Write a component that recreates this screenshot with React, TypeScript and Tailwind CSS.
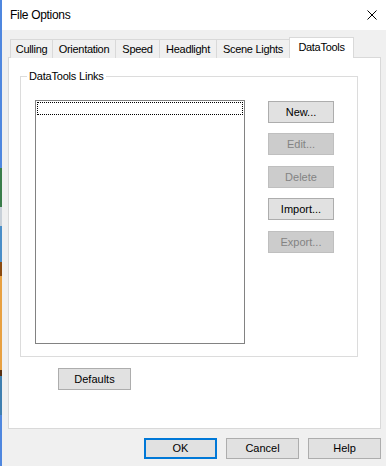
import clsx from "clsx";

const font = "font-['Liberation_Sans',Arial,sans-serif]";

type BtnProps = {
  label: string;
  disabled?: boolean;
  primary?: boolean;
  className?: string;
};

function Btn({ label, disabled, primary, className }: BtnProps) {
  return (
    <button
      className={clsx(
        "flex items-center justify-center text-[11px] leading-none",
        disabled
          ? "bg-[#cccccc] border border-[#bfbfbf] text-[#838383]"
          : "bg-[#e1e1e1] text-black",
        !disabled && (primary ? "border-2 border-[#0078d7]" : "border border-[#adadad]"),
        className
      )}
    >
      {label}
    </button>
  );
}

const tabs = [
  { label: "Culling", w: "w-[43px]" },
  { label: "Orientation", w: "w-[64px]" },
  { label: "Speed", w: "w-[45px]" },
  { label: "Headlight", w: "w-[58px]" },
  { label: "Scene Lights", w: "w-[74px]" },
];

export default function App() {
  return (
    <div className={clsx("flex w-[386px] h-[466px] overflow-hidden bg-[#f0f0f0] text-black", font)}>
      {/* desktop peeking through at the window edge */}
      <div className="w-[2px] flex flex-col shrink-0">
        <div className="h-[168px] bg-[#4f87df]" />
        <div className="h-[39px] bg-[#3a7d4a]" />
        <div className="h-[19px] bg-[#c8d0d8]" />
        <div className="h-[36px] bg-[#4a8ec8]" />
        <div className="h-[14px] bg-[#8a4a10]" />
        <div className="h-[94px] bg-[#e8a040]" />
        <div className="h-[6px] bg-[#5a3010]" />
        <div className="h-[39px] bg-[#3f7fb0]" />
        <div className="flex-1 bg-[#4f87df]" />
      </div>

      <div className="flex-1 flex flex-col">
        {/* title bar */}
        <div className="h-[30px] bg-white flex items-center justify-between pl-[8px] pr-[9px]">
          <span className="text-[12px] tracking-[-0.3px]">File Options</span>
          <svg width="10" height="10" viewBox="0 0 10 10" className="block">
            <path d="M0.5 0.5 L9.5 9.5 M9.5 0.5 L0.5 9.5" stroke="#000" strokeWidth="1" fill="none" />
          </svg>
        </div>

        <div className="pl-[6px] pr-[5px] pt-[7px]">
          {/* tab strip */}
          <div className="flex items-end h-[21px] pl-[2px]">
            {tabs.map((t, i) => (
              <div
                key={t.label}
                className={clsx(
                  "h-[19px] border border-b-0 border-[#d9d9d9] bg-[#f0f0f0] flex items-center justify-center text-[11px] tracking-[-0.3px]",
                  t.w,
                  i > 0 && "-ml-px"
                )}
              >
                {t.label}
              </div>
            ))}
            <div className="relative z-10 -ml-px h-[21px] w-[65px] border border-b-0 border-[#d9d9d9] bg-white flex items-center justify-center pb-[2px] text-[11px] tracking-[-0.3px]">
              DataTools
            </div>
          </div>

          {/* tab page */}
          <div className="-mt-px h-[372px] border border-[#d9d9d9] bg-white pl-[11px] pt-[12px]">
            <fieldset className="w-[338px] border border-[#dcdcdc] pl-[14px] pb-[12px] pt-[17px]">
              <legend className="-ml-[8px] px-[2px] text-[11px] leading-[13px] tracking-[-0.2px]">
                DataTools Links
              </legend>
              <div className="flex">
                <div className="w-[210px] h-[244px] border border-[#828282] bg-white p-[1px]">
                  <div className="h-[13px] border border-dotted border-black" />
                </div>
                <div className="ml-[23px] mt-[1px] flex flex-col">
                  <Btn label="New..." className="w-[66px] h-[22px]" />
                  <Btn label="Edit..." disabled className="w-[66px] h-[22px] mt-[10px]" />
                  <Btn label="Delete" disabled className="w-[66px] h-[22px] mt-[11px]" />
                  <Btn label="Import..." className="w-[66px] h-[22px] mt-[10px]" />
                  <Btn label="Export..." disabled className="w-[66px] h-[22px] mt-[11px]" />
                </div>
              </div>
            </fieldset>
            <Btn label="Defaults" className="ml-[38px] mt-[11px] w-[73px] h-[22px]" />
          </div>
        </div>

        {/* dialog buttons */}
        <div className="flex justify-end gap-[9px] pr-[5px] pt-[9px]">
          <Btn label="OK" primary className="w-[73px] h-[21px]" />
          <Btn label="Cancel" className="w-[73px] h-[21px]" />
          <Btn label="Help" className="w-[73px] h-[21px]" />
        </div>
      </div>
    </div>
  );
}
